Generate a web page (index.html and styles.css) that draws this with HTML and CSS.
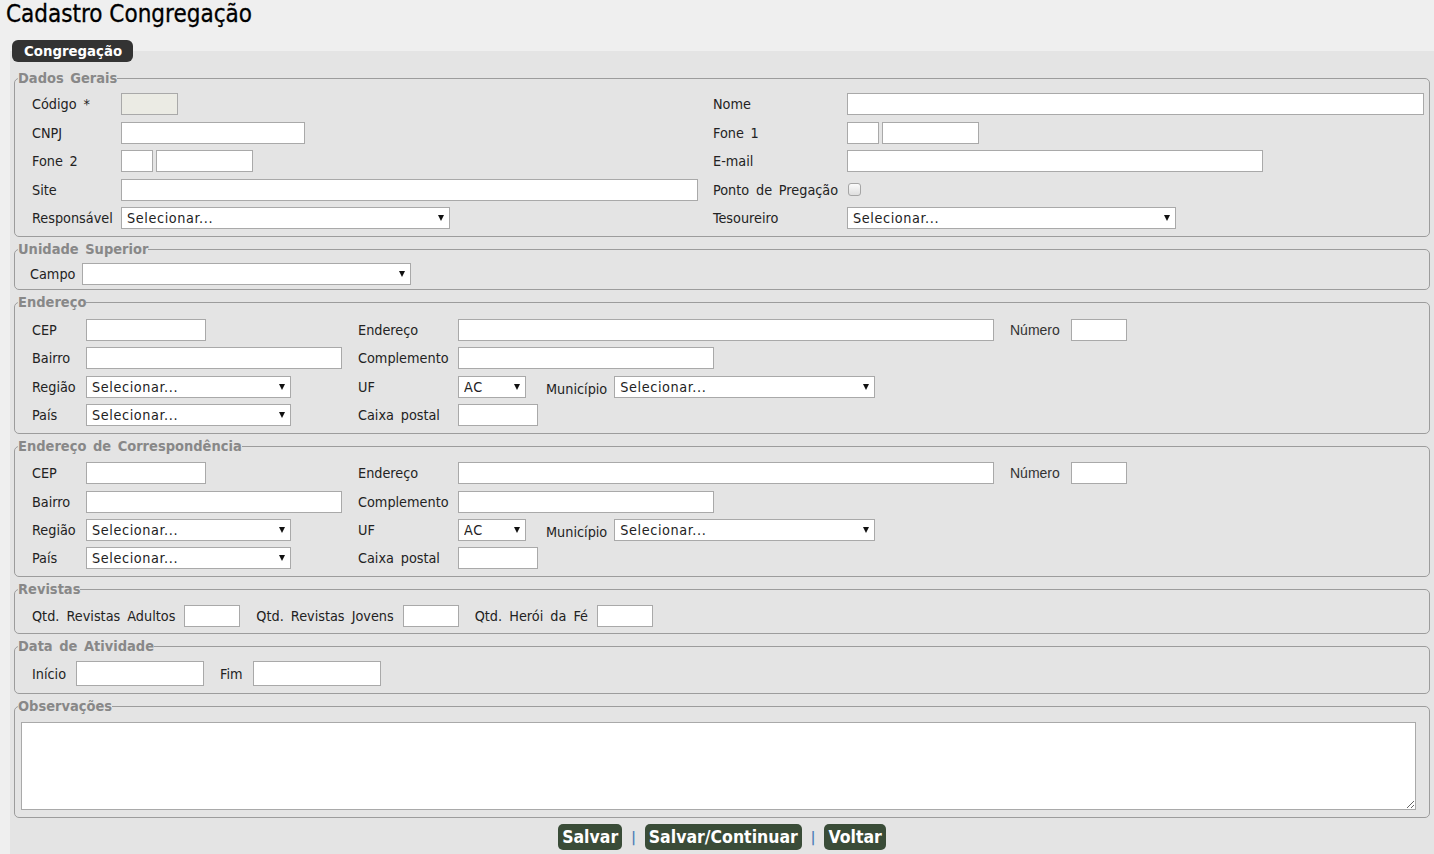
FILE: index.html
```html
<!DOCTYPE html>
<html lang="pt-BR">
<head>
<meta charset="utf-8">
<title>Cadastro Congregação</title>
<link rel="stylesheet" href="styles.css">
</head>
<body>
<h1 class="title">Cadastro Congregação</h1>
<div class="tabbar"><span class="tab">Congregação</span></div>
<div class="panel">
  <fieldset class="fs fs-gerais">
    <legend>Dados Gerais</legend>
    <div class="grid-gerais">
      <label>Código *</label>
      <div class="cell"><input class="in w57" type="text" disabled></div>
      <label>Nome</label>
      <div class="cell"><input class="in w576" type="text"></div>

      <label>CNPJ</label>
      <div class="cell"><input class="in w184" type="text"></div>
      <label>Fone 1</label>
      <div class="cell"><input class="in w32" type="text"><input class="in w97" type="text"></div>

      <label>Fone 2</label>
      <div class="cell"><input class="in w32" type="text"><input class="in w97" type="text"></div>
      <label>E-mail</label>
      <div class="cell"><input class="in w416" type="text"></div>

      <label>Site</label>
      <div class="cell"><input class="in w576" type="text"></div>
      <label>Ponto de Pregação</label>
      <div class="cell"><input class="chk" type="checkbox"></div>

      <label>Responsável</label>
      <div class="cell"><span class="sel"><select class="w329"><option>Selecionar...</option></select></span></div>
      <label>Tesoureiro</label>
      <div class="cell"><span class="sel"><select class="w329"><option>Selecionar...</option></select></span></div>
    </div>
  </fieldset>

  <fieldset class="fs fs-unidade">
    <legend>Unidade Superior</legend>
    <div class="row-inline row-campo">
      <label>Campo</label>
      <span class="sel"><select class="w329"><option></option></select></span>
    </div>
  </fieldset>

  <fieldset class="fs fs-end">
    <legend>Endereço</legend>
    <div class="grid-end">
      <label>CEP</label>
      <div class="cell"><input class="in w120" type="text"></div>
      <label>Endereço</label>
      <div class="cell"><input class="in w536" type="text"><label class="lbl-num">Número</label><input class="in w56" type="text"></div>

      <label>Bairro</label>
      <div class="cell"><input class="in w256" type="text"></div>
      <label>Complemento</label>
      <div class="cell"><input class="in w256" type="text"></div>

      <label>Região</label>
      <div class="cell"><span class="sel"><select class="w205"><option>Selecionar...</option></select></span></div>
      <label>UF</label>
      <div class="cell"><span class="sel"><select class="w68"><option>AC</option></select></span><label class="lbl-mun">Município</label><span class="sel"><select class="w261"><option>Selecionar...</option></select></span></div>

      <label>País</label>
      <div class="cell"><span class="sel"><select class="w205"><option>Selecionar...</option></select></span></div>
      <label>Caixa postal</label>
      <div class="cell"><input class="in w80" type="text"></div>
    </div>
  </fieldset>

  <fieldset class="fs fs-corr">
    <legend>Endereço de Correspondência</legend>
    <div class="grid-end">
      <label>CEP</label>
      <div class="cell"><input class="in w120" type="text"></div>
      <label>Endereço</label>
      <div class="cell"><input class="in w536" type="text"><label class="lbl-num">Número</label><input class="in w56" type="text"></div>

      <label>Bairro</label>
      <div class="cell"><input class="in w256" type="text"></div>
      <label>Complemento</label>
      <div class="cell"><input class="in w256" type="text"></div>

      <label>Região</label>
      <div class="cell"><span class="sel"><select class="w205"><option>Selecionar...</option></select></span></div>
      <label>UF</label>
      <div class="cell"><span class="sel"><select class="w68"><option>AC</option></select></span><label class="lbl-mun">Município</label><span class="sel"><select class="w261"><option>Selecionar...</option></select></span></div>

      <label>País</label>
      <div class="cell"><span class="sel"><select class="w205"><option>Selecionar...</option></select></span></div>
      <label>Caixa postal</label>
      <div class="cell"><input class="in w80" type="text"></div>
    </div>
  </fieldset>

  <fieldset class="fs fs-rev">
    <legend>Revistas</legend>
    <div class="row-inline row-rev">
      <label>Qtd. Revistas Adultos</label><input class="in w56" type="text">
      <label>Qtd. Revistas Jovens</label><input class="in w56" type="text">
      <label>Qtd. Herói da Fé</label><input class="in w56" type="text">
    </div>
  </fieldset>

  <fieldset class="fs fs-data">
    <legend>Data de Atividade</legend>
    <div class="row-inline row-data">
      <label>Início</label><input class="in w128 tall" type="text">
      <label>Fim</label><input class="in w128 tall" type="text">
    </div>
  </fieldset>

  <fieldset class="fs fs-obs">
    <legend>Observações</legend>
    <textarea class="obs"></textarea>
  </fieldset>

  <div class="actions">
    <span class="btn">Salvar</span>
    <span class="sep">|</span>
    <span class="btn">Salvar/Continuar</span>
    <span class="sep">|</span>
    <span class="btn">Voltar</span>
  </div>
</div>
</body>
</html>
```

FILE: styles.css
```css
* { box-sizing: border-box; }

body {
  margin: 0;
  background: #efefef;
  font-family: "DejaVu Sans Condensed", "DejaVu Sans", sans-serif;
  font-stretch: condensed;
  font-size: 14.3px;
  word-spacing: 2.7px;
  color: #222;
}

.title {
  margin: 0;
  padding: 2px 0 0 6px;
  font-size: 24px;
  line-height: 25px;
  font-weight: normal;
  word-spacing: 0;
  color: #000;
  -webkit-text-stroke: 0.3px #000;
}

.tabbar {
  margin-top: 13px;
  margin-bottom: -11px;
  padding-left: 12px;
  height: 22px;
  position: relative;
  z-index: 1;
}

.tab {
  display: inline-block;
  height: 22px;
  line-height: 22px;
  padding: 0 11px 0 12px;
  background: #333;
  color: #fff;
  font-weight: bold;
  font-size: 14.8px;
  border-radius: 6px;
}

.panel {
  margin-left: 10px;
  background: #e4e4e4;
  padding-top: 18px;
  padding-bottom: 6px;
}

.fs {
  margin: 0 4px 3px;
  border: 1px solid #9c9c9c;
  border-radius: 5px;
  padding: 6px 3px 7px;
  min-width: 0;
}

.fs legend {
  padding: 0;
  font-weight: bold;
  font-size: 14.5px;
  line-height: 18px;
  word-spacing: 2px;
  color: #888;
}

.fs-unidade { padding-top: 5px; padding-bottom: 4px; }
.fs-end { padding-top: 8px; }
.fs-corr { padding-top: 7px; padding-bottom: 7px; }
.fs-rev { padding-top: 7px; padding-bottom: 6px; }
.fs-data { padding-bottom: 7px; }
.fs-obs { padding-top: 7px; }

label { white-space: nowrap; }

.grid-gerais {
  display: grid;
  grid-template-columns: 89px 592px 134px 1fr;
  grid-auto-rows: 22px;
  row-gap: 6.5px;
  align-items: center;
  padding-left: 14px;
}

.grid-end {
  display: grid;
  grid-template-columns: 54px 272px 100px 1fr;
  grid-auto-rows: 22px;
  row-gap: 6.4px;
  align-items: center;
  padding-left: 14px;
}

.cell {
  display: flex;
  align-items: center;
  gap: 3px;
  height: 22px;
}

.in {
  height: 22px;
  border: 1px solid #a9a9a9;
  background: #fff;
  padding: 0 3px;
  font: inherit;
  margin: 0;
  border-radius: 0;
}

.in:disabled { background: #ebebe4; }
.in.tall { height: 25px; }

.w32 { width: 32px; }
.w56 { width: 56px; }
.w57 { width: 57px; }
.w68 { width: 68px; }
.w80 { width: 80px; }
.w97 { width: 97px; }
.w120 { width: 120px; }
.w128 { width: 128px; }
.w184 { width: 184px; }
.w205 { width: 205px; }
.w256 { width: 256px; }
.w261 { width: 261px; }
.w329 { width: 329px; }
.w416 { width: 416px; }
.w536 { width: 536px; }
.w576 { width: 577px; }

.sel {
  position: relative;
  display: inline-block;
  height: 22px;
}

.sel select {
  appearance: none;
  -webkit-appearance: none;
  height: 22px;
  border: 1px solid #a9a9a9;
  border-radius: 0;
  background: #fff;
  font: inherit;
  word-spacing: 0;
  color: #222;
  letter-spacing: 0.6px;
  padding: 0 0 0 5px;
  margin: 0;
  display: block;
}

.sel::after {
  content: "";
  position: absolute;
  right: 6px;
  top: 8px;
  border-left: 3px solid transparent;
  border-right: 3px solid transparent;
  border-top: 6px solid #111;
}

.chk {
  appearance: none;
  -webkit-appearance: none;
  width: 13px;
  height: 13px;
  margin: 0 0 0 1px;
  border: 1px solid #a5a5a5;
  border-radius: 3px;
  background: linear-gradient(#fbfbfb, #dedede);
}

.lbl-num {
  font-family: "Liberation Sans", Arial, sans-serif;
  font-size: 14px;
  color: #333;
  margin: 0 8px 0 13px;
}

.lbl-mun {
  margin: 0 4px 0 17px;
  padding-top: 5px;
}

.row-inline {
  display: flex;
  align-items: center;
}

.row-campo {
  padding-left: 12px;
  gap: 7px;
}

.row-rev {
  padding-left: 14px;
}

.row-rev label {
  word-spacing: 3px;
  margin-right: 9px;
}

.row-rev input { margin-right: 16px; }

.row-data { padding-left: 14px; }
.row-data label { margin-right: 10px; }
.row-data input { margin-right: 16px; }

.obs {
  display: block;
  margin: 0 0 0 3px;
  width: 1395px;
  height: 88px;
  border: 1px solid #a9a9a9;
  background: #fff;
  font: inherit;
}

.actions {
  display: flex;
  justify-content: center;
  align-items: center;
  padding-top: 3px;
}

.btn {
  display: inline-block;
  height: 26px;
  line-height: 26px;
  padding: 0 4px;
  background: #3a4c38;
  color: #fff;
  font-weight: bold;
  font-size: 17.5px;
  word-spacing: 0;
  border-radius: 5px;
}

.sep {
  color: #4f7fb8;
  font-size: 14px;
  font-weight: bold;
  margin: 0 9px;
}
```
